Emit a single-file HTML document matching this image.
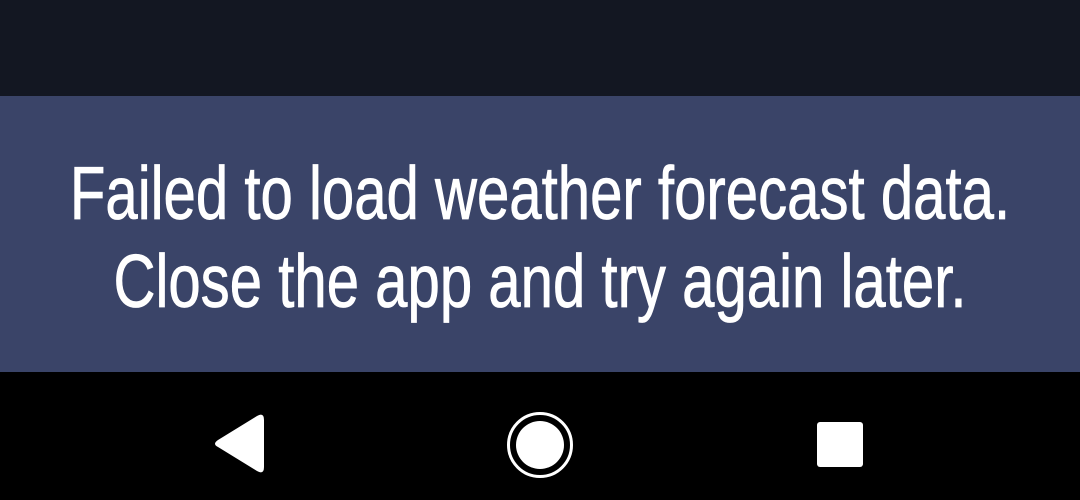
<!DOCTYPE html>
<html><head><style>
html,body{margin:0;padding:0;width:1080px;height:500px;overflow:hidden;background:#000}
.top{position:absolute;left:0;top:0;width:1080px;height:96px;background:#131722}
.mid{position:absolute;left:0;top:96px;width:1080px;height:276px;background:#3a4468}
.line{position:absolute;left:540px;color:#fff;font-family:"Liberation Sans Narrow","Liberation Sans",sans-serif;font-size:75px;line-height:88px;white-space:nowrap;transform:translateX(-50%) scaleX(0.775);-webkit-text-stroke:0.8px #fff}
</style></head><body>
<div class="top"></div>
<div class="mid"></div>
<div class="line" style="top:149px">Failed to load weather forecast data.</div>
<div class="line" style="top:237px">Close the app and try again later.</div>
<svg style="position:absolute;left:0;top:372px" width="1080" height="128">
<path d="M264 48 L264 95 Q264 103 257 99 L218 75 Q212 72 218 68 L257 44 Q264 40 264 48Z" fill="#fff"/>
<circle cx="540" cy="73" r="31.5" fill="none" stroke="#fff" stroke-width="3"/>
<circle cx="540" cy="73" r="24" fill="#fff"/>
<rect x="817" y="50" width="46" height="45" rx="3" fill="#fff"/>
</svg>
</body></html>
